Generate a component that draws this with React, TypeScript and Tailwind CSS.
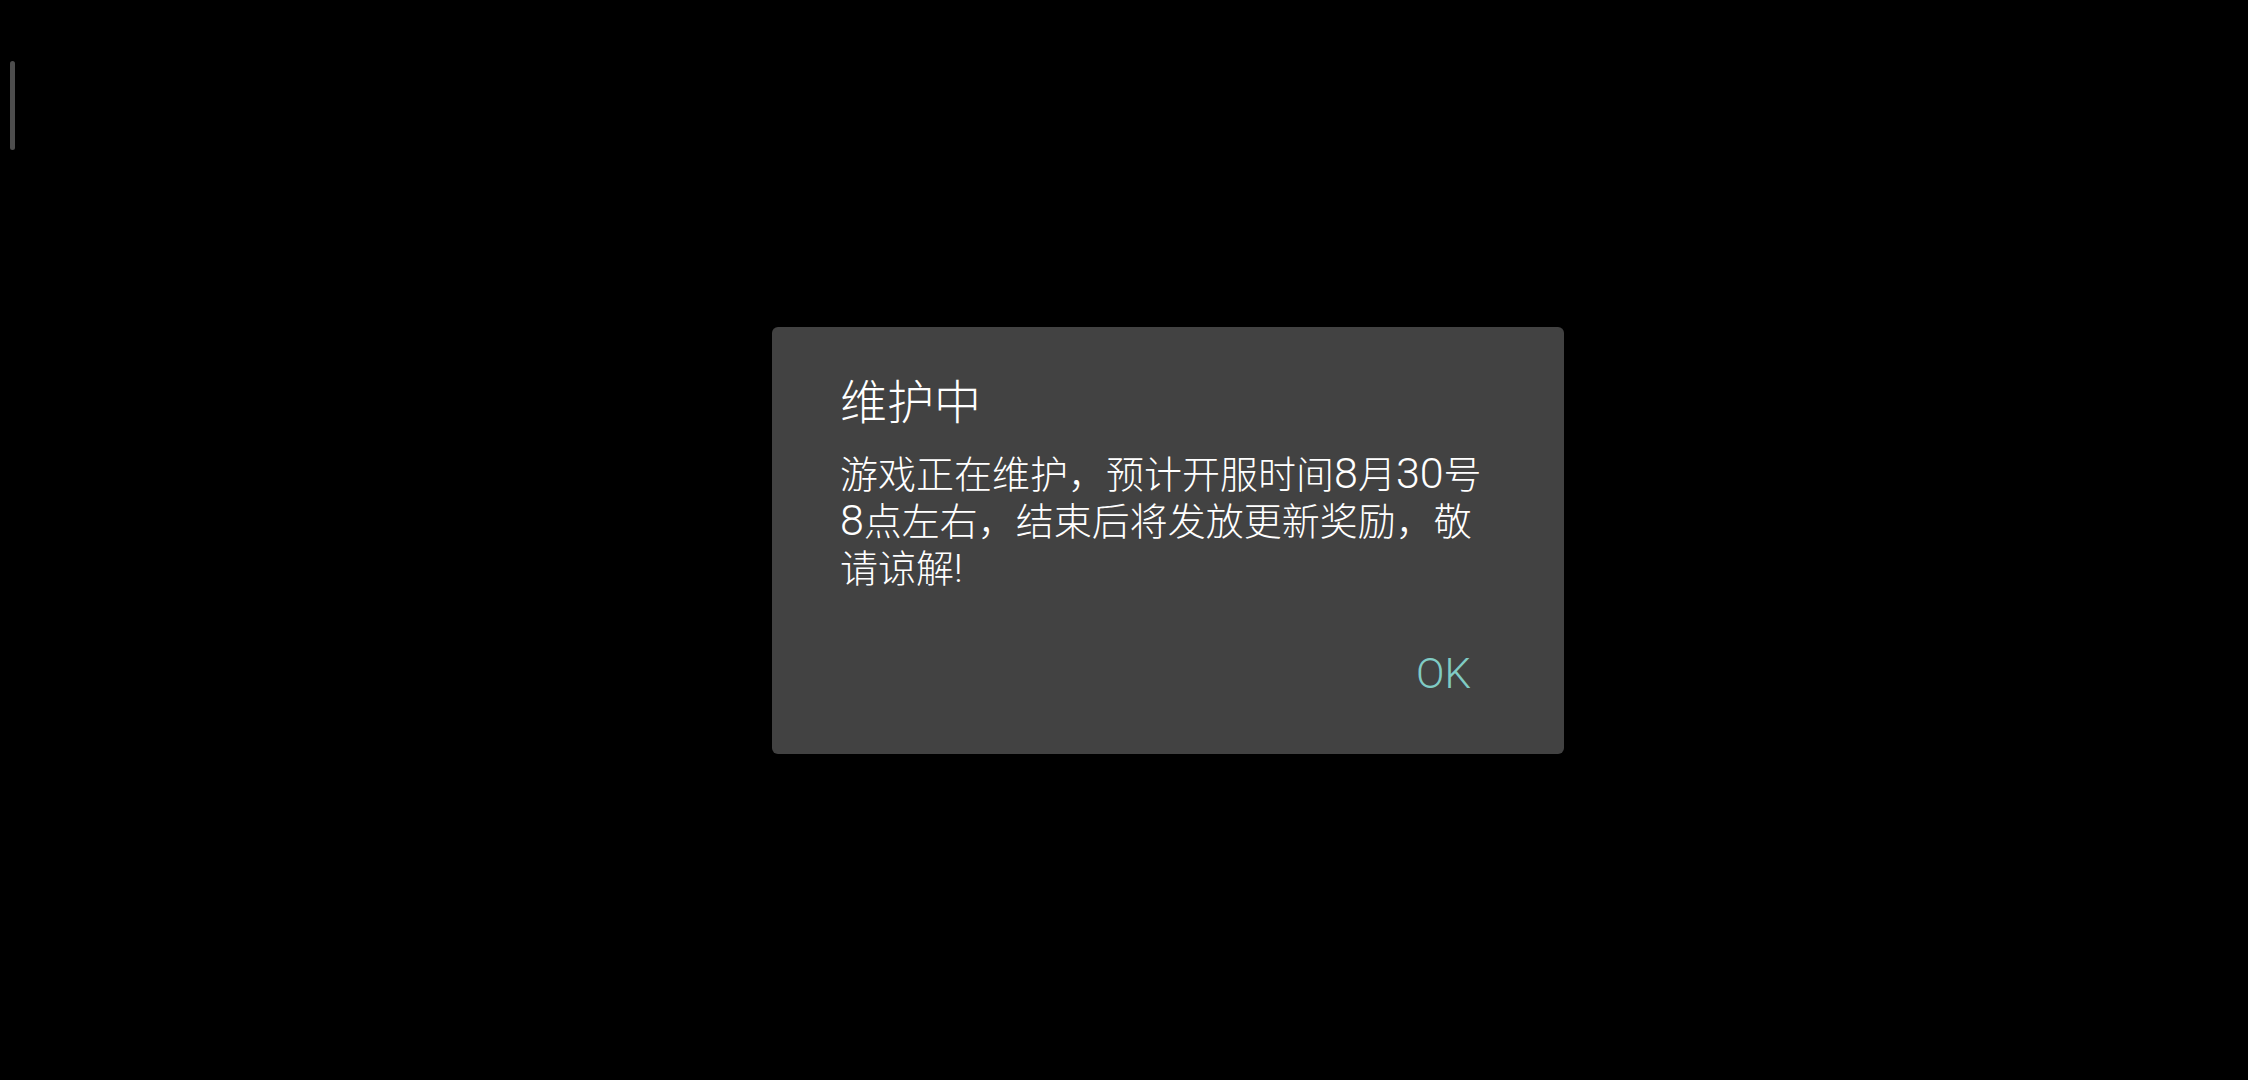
import React from 'react';

const cjk = { fontFamily: '"Noto Sans CJK SC", "Noto Sans", sans-serif' };
// Roboto first: thin geometric digits and compact line boxes, CJK falls back to Noto
const mixed = { fontFamily: 'Roboto, "Noto Sans CJK SC", sans-serif' };

// digits in the reference font are taller than the Chinese text around them
const Num = ({ children }: { children: React.ReactNode }) => (
  <span className="inline-block text-[43px] leading-none">{children}</span>
);

export default function App() {
  return (
    <div className="relative w-[2248px] h-[1080px] bg-black overflow-hidden" style={cjk}>
      {/* scroll indicator */}
      <div className="absolute left-[10px] top-[61px] w-[5px] h-[89px] rounded-full bg-[#4d4d4d]" />

      <div className="flex h-full items-center justify-center pl-[88px]">
        <div className="flex flex-col w-[792px] h-[427px] rounded-[6px] bg-[#424242] pt-[42px] px-[68px]">
          <h1 className="text-[47px] leading-[60px] font-light text-white">维护中</h1>
          <p className="mt-[23px] text-[38px] leading-[47px] font-light text-white" style={mixed}>
            游戏正在维护，预计开服时间<Num>8</Num>月<Num>30</Num>号<Num>8</Num>
            {'点左右，结束后将发放更新奖励，敬'}
            {'请谅解!'}
          </p>
          <div className="mt-auto mb-[56px] flex justify-end">
            <button className="text-[42px] leading-[48px] font-light text-[#80cbc4] mr-[25px]" style={mixed}>
              OK
            </button>
          </div>
        </div>
      </div>
    </div>
  );
}
